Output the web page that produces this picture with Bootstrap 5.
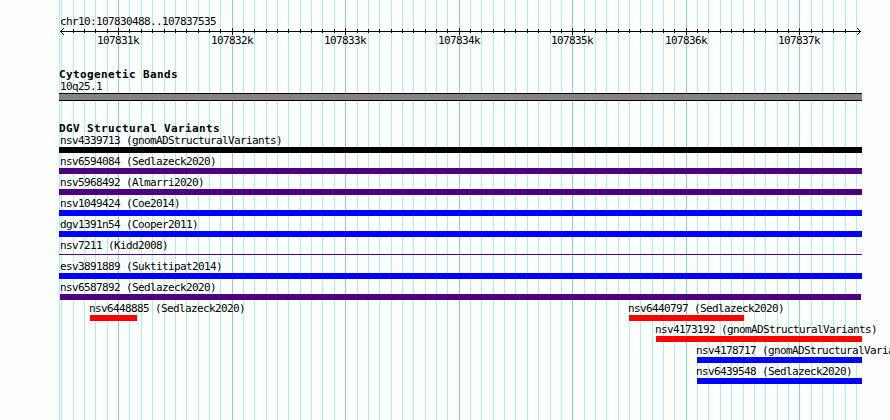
<!DOCTYPE html>
<html lang="en">
<head>
  <meta charset="UTF-8" />
  <meta name="viewport" content="width=device-width, initial-scale=1.0"/>
  <title>chr10:107830488..107837535</title>
  <link href="https://cdn.jsdelivr.net/npm/bootstrap@5.3.2/dist/css/bootstrap.min.css" rel="stylesheet" />
  <style>
    body {
      background-color: #fdfffc;
      color: #000;
      font-family: "DejaVu Sans Mono", monospace;
      font-size: 11px;
      line-height: 12px;
      letter-spacing: -0.622px;
    }
    .browser {
      width: 890px;
      height: 420px;
    }
    .browser svg {
      display: block;
      shape-rendering: crispEdges;
    }
    .region {
      padding: 16px 0 0 60px;
      height: 28px;
    }
    .scale text {
      font-size: 11px;
    }
    .track-title {
      font-weight: bold;
      letter-spacing: 0.378px;
      padding-left: 59px;
    }
    .cytoband {
      padding-top: 21px;
    }
    .band-label {
      padding-left: 60px;
    }
    .band-bar {
      width: 803px;
      height: 8px;
      margin-left: 59px;
      background: #848284;
      border: solid #000;
      border-width: 1px 0;
    }
    .variants {
      padding-top: 22px;
    }
    .track-row {
      height: 21px;
    }
    .feature-bar {
      height: 6px;
    }
    .feature-bar.thin {
      height: 1px;
      margin-top: 2px;
    }
    .black { background: #000; }
    .indigo { background: #4b0082; }
    .blue { background: #00f; }
    .red { background: #f00; }
  </style>
</head>
<body>
  <div class="browser position-relative overflow-hidden">
    <svg id="grid" class="position-absolute top-0 start-0" width="890" height="420"></svg>

    <div class="position-relative">
      <div class="region text-nowrap">chr10:107830488..107837535</div>
      <svg id="scale" class="scale" width="890" height="20"></svg>

      <div class="cytoband">
        <div class="track-title">Cytogenetic Bands</div>
        <div class="band-label">10q25.1</div>
        <div class="band-bar"></div>
      </div>

      <div class="variants">
        <div class="track-title">DGV Structural Variants</div>
        <div id="rows"></div>
      </div>
    </div>
  </div>

  <script src="https://cdn.jsdelivr.net/npm/bootstrap@5.3.2/dist/js/bootstrap.bundle.min.js"></script>
  <script>
    const regionStart = 107830488;
    const regionEnd = 107837535;
    const left = 60;
    const width = 800;
    const toX = bp => Math.round(left + (bp - regionStart) * width / (regionEnd - regionStart));

    // grid lines and ruler ticks, one every 100 bp
    let gridHTML = `<rect x="59" y="0" width="1" height="420" fill="#afeeee"/>`;
    let scaleHTML = `<rect x="60" y="3" width="801" height="1"/>`;
    for (let bp = 107830500; bp <= regionEnd; bp += 100) {
      const x = toX(bp);
      const major = bp % 1000 === 0;
      gridHTML += `<rect x="${x}" y="0" width="1" height="420" fill="${major ? "#87ceeb" : "#afeeee"}"/>`;
      if (major) {
        scaleHTML += `<rect x="${x}" y="0" width="1" height="7"/>`;
        scaleHTML += `<text x="${x - 21}" y="16">${bp / 1000}k</text>`;
      } else if (x > 63 && x < 856) {
        scaleHTML += `<rect x="${x}" y="1" width="1" height="4"/>`;
      }
    }
    // arrow heads
    for (let i = 1; i <= 3; i++) {
      scaleHTML += `<rect x="${60 + i}" y="${3 - i}" width="1" height="1"/><rect x="${60 + i}" y="${3 + i}" width="1" height="1"/>`;
      scaleHTML += `<rect x="${860 - i}" y="${3 - i}" width="1" height="1"/><rect x="${860 - i}" y="${3 + i}" width="1" height="1"/>`;
    }
    document.getElementById("grid").innerHTML = gridHTML;
    document.getElementById("scale").innerHTML = scaleHTML;

    // name, start, end, color, label indent
    const rows = [
      [["nsv4339713 (gnomADStructuralVariants)", 59, 862, "black", 1]],
      [["nsv6594084 (Sedlazeck2020)", 59, 862, "indigo", 1]],
      [["nsv5968492 (Almarri2020)", 59, 862, "indigo", 1]],
      [["nsv1049424 (Coe2014)", 59, 862, "blue", 1]],
      [["dgv1391n54 (Cooper2011)", 59, 862, "blue", 1]],
      [["nsv7211 (Kidd2008)", 59, 862, "indigo thin", 1]],
      [["esv3891889 (Suktitipat2014)", 59, 862, "blue", 1]],
      [["nsv6587892 (Sedlazeck2020)", 60, 861, "indigo", 0]],
      [["nsv6448885 (Sedlazeck2020)", 90, 137, "red", -1], ["nsv6440797 (Sedlazeck2020)", 629, 744, "red", -1]],
      [["nsv4173192 (gnomADStructuralVariants)", 656, 862, "red", -1]],
      [["nsv4178717 (gnomADStructuralVariants)", 697, 862, "blue", -1]],
      [["nsv6439548 (Sedlazeck2020)", 697, 862, "blue", -1]]
    ];

    let rowsHTML = "";
    rows.forEach(features => {
      let pos = 0;
      rowsHTML += `<div class="track-row d-flex">`;
      features.forEach(([name, start, end, color, indent]) => {
        rowsHTML += `
          <div class="flex-shrink-0 text-nowrap" style="margin-left:${start - pos}px;width:${end - start}px">
            <div style="text-indent:${indent}px">${name}</div>
            <div class="feature-bar ${color}"></div>
          </div>`;
        pos = end;
      });
      rowsHTML += `</div>`;
    });
    document.getElementById("rows").innerHTML = rowsHTML;
  </script>
</body>
</html>
